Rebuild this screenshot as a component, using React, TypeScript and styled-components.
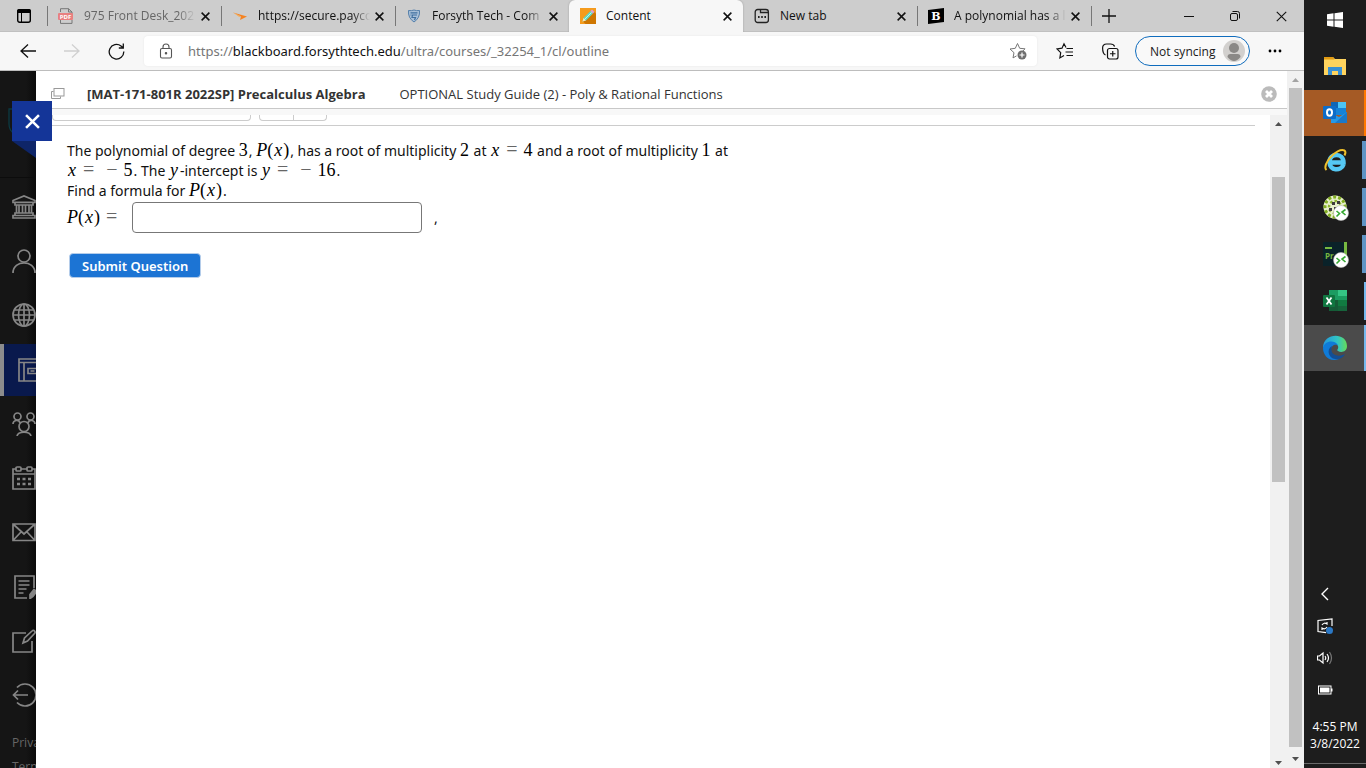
import React from "react";
import styled, { createGlobalStyle, css } from "styled-components";

const UI = `"Open Sans", "Noto Sans", sans-serif`;

const Global = createGlobalStyle`
  *, *::before, *::after { box-sizing: border-box; }
  html, body, #root { height: 100%; }
  body { margin: 0; font-family: ${UI}; font-size: 12px; color: #1a1a1a; overflow: hidden; background: #fff; }
  button { border: 0; padding: 0; background: none; font: inherit; color: inherit; }
  a { color: inherit; text-decoration: none; }
  svg { display: block; flex: none; }
  p, h1, h2, ul { margin: 0; padding: 0; }
  ul { list-style: none; }
`;

const Desktop = styled.div`
  display: grid;
  grid-template-columns: minmax(0, 1fr) 62px;
  height: 100vh;
`;

const Browser = styled.div`
  display: flex;
  flex-direction: column;
  min-width: 0;
  min-height: 0;
`;

/* ---------- tab strip ---------- */

const TabStrip = styled.div`
  display: flex;
  height: 32px;
  background: #cdcdcd;
  box-shadow: inset 0 -1px 0 #c0c0c0;
`;

const IconButton = styled.button<{ $w: number }>`
  display: flex;
  align-items: center;
  justify-content: center;
  width: ${(p) => p.$w}px;
  flex: none;
`;

const divider = css`
  &::before {
    content: "";
    position: absolute;
    left: 0;
    top: 6px;
    height: 20px;
    width: 1px;
    background: #777;
  }
`;

const TabBox = styled.div<{ $active?: boolean; $line?: boolean; $dim?: boolean }>`
  display: flex;
  align-items: center;
  flex: 0 1 174px;
  min-width: 0;
  padding: 0 8px 0 11px;
  position: relative;
  color: ${(p) => (p.$dim ? "#666" : "#111")};
  ${(p) =>
    p.$active &&
    css`
      background: #f7f7f7;
      border-radius: 6px 6px 0 0;
      box-shadow: 0 0 2px #999;
      clip-path: inset(-2px -2px 0 -2px);
    `}
  ${(p) => p.$line && divider}
`;

const TabTitle = styled.span<{ $fade?: boolean }>`
  flex: 1;
  min-width: 0;
  margin: 0 2px 0 10px;
  line-height: 20px;
  white-space: nowrap;
  overflow: hidden;
  ${(p) => p.$fade && css`mask-image: linear-gradient(to right, #000 84%, transparent 100%);`}
`;

const NewTabSlot = styled.div`
  position: relative;
  display: flex;
  padding: 0 10px;
  ${divider}
`;

const WindowControls = styled.div`
  display: flex;
  margin-left: auto;
`;

/* ---------- toolbar ---------- */

const Toolbar = styled.div`
  display: flex;
  align-items: center;
  height: 39px;
  padding: 0 4px 0 6px;
  background: #f7f7f7;
  border-bottom: 1px solid #bdbdbd;
`;

const AddressBar = styled.div`
  display: flex;
  align-items: center;
  flex: 1;
  min-width: 0;
  height: 30px;
  margin-left: 6px;
  padding: 0 9px 0 14px;
  background: #fff;
  border-radius: 4px;
  box-shadow: 0 0 2px #e4e4e4;
`;

const Address = styled.a`
  flex: 1;
  min-width: 0;
  margin-left: 14px;
  font-family: "Noto Sans", sans-serif;
  font-size: 13px;
  line-height: 20px;
  color: #767676;
  white-space: nowrap;
  overflow: hidden;
  b { font-weight: 400; color: #111; }
`;

const Profile = styled.button`
  display: flex;
  align-items: center;
  justify-content: space-between;
  width: 115px;
  height: 30px;
  margin-left: 8px;
  padding: 0 4px 0 14px;
  border: 1px solid #0f6cbd;
  border-radius: 15px;
  background: #f9f9f9;
`;

/* ---------- page ---------- */

const Page = styled.div`
  display: flex;
  flex: 1;
  min-height: 0;
`;

const Rail = styled.nav`
  position: relative;
  width: 36px;
  flex: none;
  background: linear-gradient(to right, #151515 26px, #0b0b0b);
  color: #868686;
`;

const RailClip = styled.div`
  display: flex;
  flex-direction: column;
  height: 100%;
  overflow: hidden;
`;

const RailLogo = styled.div`
  height: 107px;
  flex: none;
  padding: 37px 0 0 8px;
  border-bottom: 1px solid #0c0c0c;
`;

const RailList = styled.ul`
  display: flex;
  flex-direction: column;
  justify-content: space-between;
  height: 543px;
  padding-top: 3px;
  flex: none;
`;

const RailItem = styled.a<{ $on?: boolean }>`
  display: flex;
  align-items: center;
  height: 52px;
  padding-left: 12px;
  ${(p) => p.$on && css`
    background: linear-gradient(to right, #09194d 26px, #071543);
    border-left: 4px solid #8c8c8c;
    padding-left: 13px;
  `}
`;

const RailFooter = styled.div`
  display: flex;
  flex-direction: column;
  padding: 10px 0 0 12px;
  line-height: 24px;
  color: #666;
`;

const Ribbon = styled.button`
  position: absolute;
  left: 12px;
  top: 30px;
  width: 40px;
  height: 40px;
  display: flex;
  align-items: center;
  justify-content: center;
  background: #143598;
  z-index: 2;
`;

const RibbonFold = styled.svg`
  position: absolute;
  left: 12px;
  top: 70px;
`;

const Panel = styled.main`
  display: flex;
  flex-direction: column;
  flex: 1;
  min-width: 0;
  background: #fff;
`;

const PanelHeader = styled.header`
  display: flex;
  align-items: center;
  height: 38px;
  flex: none;
  padding: 8px 10px 0 15px;
  border-bottom: 1px solid #c8c8c8;
  color: #333;
  font-size: 13px;
  line-height: 20px;
  white-space: nowrap;
`;

const Course = styled.h1`
  margin-left: 22px;
  font-size: 13px;
  font-weight: 700;
`;

const ItemTitle = styled.h2`
  flex: 1;
  margin-left: 34px;
  font-size: 13px;
  font-weight: 400;
`;

const Frame = styled.div`
  display: flex;
  flex: 1;
  min-height: 0;
  border-top: 6px solid #f8f8f8;
`;

const FrameBody = styled.div`
  flex: 1;
  min-width: 0;
  padding: 0 15px 0 16px;
  overflow: hidden;
`;

const CutControls = styled.div`
  display: flex;
  gap: 8px;
  height: 11px;
  padding-bottom: 4px;
  border-bottom: 1px solid #ccc;
`;

const CutBox = styled.div<{ $w: number }>`
  display: flex;
  width: ${(p) => p.$w}px;
  border: 1px solid #ccc;
  border-top: 0;
  border-radius: 0 0 4px 4px;
  span { width: 34px; border-right: 1px solid #ccc; }
`;

const Question = styled.form`
  padding: 15px 0 0 15px;
  font-family: "Noto Sans", sans-serif;
  font-size: 14px;
  line-height: 20px;
  color: #111;
  white-space: nowrap;
`;

const M = styled.span`
  margin-right: 1px;
  font-family: "Liberation Serif", serif;
  font-size: 18px;
  line-height: 18px;
  color: #000;
`;

const Var = styled.i`
  margin: 0 1px;
`;

const Op = styled.span`
  margin: 0 6px;
  font-size: 20px;
  line-height: 16px;
  color: #666;
`;

const AnswerRow = styled.div`
  display: flex;
  align-items: center;
  margin-top: 1px;
  label { width: 65px; }
`;

const Answer = styled.input`
  width: 290px;
  height: 31px;
  margin-right: 12px;
  border: 1px solid #777;
  border-radius: 4px;
  background: #fff;
`;

const Submit = styled.button`
  height: 25px;
  margin: 20px 0 0 2px;
  padding: 0 12px;
  border: 1px solid #b5cdea;
  border-radius: 4px;
  background: #1c74d4;
  color: #fff;
  font-size: 13px;
  font-weight: 600;
  line-height: 20px;
`;

const Track = styled.div<{ $outer?: boolean }>`
  display: flex;
  flex-direction: column;
  align-items: center;
  width: 17px;
  flex: none;
  padding: ${(p) => (p.$outer ? "7px 0" : "7px 0 3px")};
  background: #f1f1f1;
`;

const Thumb = styled.div<{ $before: number; $size: number; $after: number }>`
  display: flex;
  flex-direction: column;
  flex: 1;
  &::before { content: ""; flex: ${(p) => p.$before}; }
  &::after { content: ""; flex: ${(p) => p.$after}; }
  span { width: 13px; flex: ${(p) => p.$size}; background: #c1c1c1; }
`;

/* ---------- task bar ---------- */

const Taskbar = styled.aside`
  display: flex;
  flex-direction: column;
  background: #1d1d1d;
  color: #fff;
`;

const StartButton = styled.button`
  display: flex;
  align-items: center;
  justify-content: center;
  height: 40px;
  margin-bottom: 3px;
`;

const Task = styled.button<{ $bg?: string; $bar?: string; $wide?: boolean }>`
  position: relative;
  display: flex;
  align-items: center;
  justify-content: center;
  height: 46px;
  margin-bottom: 1px;
  background: ${(p) => p.$bg || "transparent"};
  &::after {
    content: "";
    position: absolute;
    right: 0;
    top: ${(p) => (p.$bg ? 0 : 4)}px;
    bottom: ${(p) => (p.$bg ? 0 : 4)}px;
    width: ${(p) => (p.$wide ? 4 : 2)}px;
    background: ${(p) => p.$bar || "transparent"};
  }
`;

const Tray = styled.div`
  display: flex;
  flex-direction: column;
  margin-top: auto;
  padding-bottom: 4px;
`;

const TrayButton = styled.button`
  display: flex;
  align-items: center;
  height: 32px;
  padding-left: 13px;
`;

const Clock = styled.time`
  margin-top: 12px;
  height: 46px;
  border-bottom: 1px solid #6a6a6a;
  text-align: center;
  line-height: 17px;
  white-space: nowrap;
`;

const Cross = ({ s = 9, w = 2, c = "#111" }: { s?: number; w?: number; c?: string }) => (
  <svg width={s} height={s} viewBox="0 0 10 10" fill="none" stroke={c} strokeWidth={w}>
    <path d="M.7.7l8.6 8.6M9.3.7L.7 9.3" />
  </svg>
);

const Line = ({ children }: { children: React.ReactNode }) => (
  <svg width="24" height="24" viewBox="0 0 24 24" fill="none" stroke="currentColor" strokeWidth="1.700">
    {children}
  </svg>
);

const PdfIcon = () => (
  <svg width="16" height="16" viewBox="0 0 16 16">
    <path d="M2.500 4V.700h8L14 4v3M10.500.700V4H14M2.500 12v3.400H14V12" fill="none" stroke="#777" />
    <rect x="0" y="5" width="15" height="7" rx="1" fill="#e88080" />
    <text x="7.500" y="10.800" fontSize="6" fontWeight="700" textAnchor="middle" fill="#fff" fontFamily="Open Sans, sans-serif">PDF</text>
  </svg>
);

const PaycomIcon = () => (
  <svg width="16" height="16" viewBox="0 0 16 16">
    <path d="M1 4.500l14 4-7 3.500 1-3.500z" fill="#f58220" />
    <path d="M1 4.500l8 4-2 .2z" fill="#f9a94b" />
  </svg>
);

const ShieldIcon = () => (
  <svg width="16" height="16" viewBox="0 0 16 16">
    <path d="M2.500 2.500q3 .5 5.500-.5 2.500 1 5.500.5.7 7.500-5.500 11.500Q1.800 10 2.500 2.500z" fill="#a9c0d8" stroke="#5580ab" />
    <path d="M4.500 4.800h7M11 7H6.500L6 9.500h3.500L8.500 12M4.500 7h1" fill="none" stroke="#3f6f9f" strokeWidth="1.200" />
  </svg>
);

const PencilIcon = () => (
  <svg width="16" height="16" viewBox="0 0 16 16">
    <path d="M0 0h16v16H0z" fill="#f59b1c" />
    <path d="M3 13.500L13.500 3 16 5.500V16H5.500z" fill="#ce7600" />
    <path d="M2.500 13.500l1-3.500 7-7L13 5.500l-7 7z" fill="#5fd6c4" />
    <path d="M10.500 3L12 1.500 14.500 4 13 5.500z" fill="#d9a0d8" />
    <path d="M2.500 13.500l1-3.500L6 12.500z" fill="#fbe3b8" />
    <path d="M4.500 11.500l7-7" stroke="#d5fff7" strokeWidth=".8" />
  </svg>
);

const NewTabIcon = () => (
  <svg width="16" height="16" viewBox="0 0 16 16" fill="none" stroke="#222" strokeWidth="1.300">
    <rect x="1.200" y="1.500" width="13.200" height="13" rx="2.500" />
    <path d="M6.500 1.500v3h8" />
    <path d="M4 9h1.600M7.200 9h1.600M10.400 9H12" strokeWidth="1.800" />
  </svg>
);

const BartlebyIcon = () => (
  <svg width="16" height="16" viewBox="0 0 16 16">
    <path d="M0 2L16 0v14L0 16z" fill="#000" />
    <text x="8" y="12" fontSize="11" fontWeight="700" textAnchor="middle" fill="#fff" fontFamily="DejaVu Serif, serif">B</text>
  </svg>
);

type TabSpec = { title: string; icon: React.ReactNode; active?: boolean; line?: boolean; dim?: boolean; fade?: boolean };

const tabs: TabSpec[] = [
  { title: "975 Front Desk_202", icon: <PdfIcon />, line: true, dim: true, fade: true },
  { title: "https://secure.payco", icon: <PaycomIcon />, line: true, fade: true },
  { title: "Forsyth Tech - Com", icon: <ShieldIcon />, line: true, fade: true },
  { title: "Content", icon: <PencilIcon />, active: true },
  { title: "New tab", icon: <NewTabIcon /> },
  { title: "A polynomial has a l", icon: <BartlebyIcon />, line: true, fade: true },
];

const rail: { name: string; on?: boolean; art: React.ReactNode }[] = [
  { name: "Institution", art: <path d="M1 5.500L12 1l11 4.500v1.800H1zM1 23h22v-2.500H1zM3 20.500V18h18v2.500M3 7.500V10h18V7.500M4.500 10v8M7 10v8M10.500 10v8M13.500 10v8M17 10v8M19.500 10v8" /> },
  { name: "Profile", art: <><circle cx="12" cy="7" r="6" /><path d="M1 24C1 10.500 23 10.500 23 24" /></> },
  { name: "Activity", art: <><circle cx="12" cy="12" r="11" /><ellipse cx="12" cy="12" rx="5.500" ry="11" /><path d="M12 1v22M1 12h22M2.500 7h19M2.500 17h19" /></> },
  { name: "Courses", on: true, art: <path d="M26 1H2v22h24M2 4.500h24M7 4.500V23M19 10.500h-8v5h8M13.500 13h4" /> },
  { name: "Organizations", art: <><circle cx="5.500" cy="4.500" r="3.500" /><circle cx="18.500" cy="4.500" r="3.500" /><circle cx="12" cy="14.500" r="5" /><path d="M1 12c0-4 6-5 7-1M23 12c0-4-6-5-7-1M5 24c1-5 13-5 14 0" /></> },
  { name: "Calendar", art: <><path d="M4 3H1v20h22V3h-3M9 3h6M1 8h22" /><rect x="4" y="1" width="5" height="4" rx="1" /><rect x="15" y="1" width="5" height="4" rx="1" /><path d="M5 13h3M10.500 13h3M16 13h3M5 18h3M10.500 18h3M16 18h3" strokeWidth="2.500" /></> },
  { name: "Messages", art: <path d="M1 4h22v16.500H1zM1 4l11 10L23 4M1 20.500l8-8.500M23 20.500L15 12" /> },
  { name: "Grades", art: <><path d="M15 23H3V1h19v12M6.500 6h11M6.500 10h11M6.500 14h8M6.500 18h5" /><path d="M18 23.500v-4l4-5 2.500 2-3.500 5z" fill="currentColor" /></> },
  { name: "Tools", art: <><path d="M14 4H1v19h19V12" /><path d="M11 14l1.500-5 7.500-7c2-2 4 1 2.500 2.500L15.500 12z" /></> },
  { name: "Sign Out", art: <path d="M5 4.500a11 11 0 1 1 0 15M16 12H1.500M6 7.500L1.500 12 6 16.500" /> },
];

const Remote = () => (
  <>
    <circle cx="18" cy="18" r="7.500" fill="#fff" stroke="#bbb" strokeWidth=".6" />
    <path d="M13.500 16l3 2.500-3 3M22.500 14.500l-3.500 2.500 3.500 3" fill="none" stroke="#36a832" strokeWidth="1.600" />
  </>
);

const tasks: { name: string; bg?: string; bar?: string; wide?: boolean; art: React.ReactNode }[] = [
  { name: "File Explorer", art: <><path d="M1 3h9l2 2h11v16H1z" fill="#ffd45e" /><path d="M1 3h9l1.500 2.500H1z" fill="#e19a12" /><path d="M5 21v-8h14v8h-4v-4H9v4z" fill="#3a91d4" /></> },
  { name: "Outlook", bg: "#a55a25", bar: "#ff7800", art: <><path d="M8 1h15v13H8z" fill="#1683d8" /><path d="M15 1h8v6h-8z" fill="#4bc5f5" /><path d="M8 1h7v6H8z" fill="#1066b5" /><path d="M8 12l8 4 8-5v11H8z" fill="#2699e8" /><path d="M24 11v11H12z" fill="#1b79c9" /><rect y="5" width="13" height="13" rx="1" fill="#0d6cc8" /><ellipse cx="6.500" cy="11.500" rx="2.500" ry="3.200" fill="none" stroke="#fff" strokeWidth="2" /></> },
  { name: "Internet Explorer", bar: "#5e94c4", wide: true, art: <><path d="M20.500 16.500c-2.500 7-14 6.500-14-2.500 0-9.500 14-9.500 14 .5H8" fill="none" stroke="#55c8f4" strokeWidth="4.500" /><path d="M3.500 22C-2 17 14-1 21.500 2.500c1.500 1 1 3 0 5" fill="none" stroke="#efc02b" strokeWidth="2" /></> },
  { name: "Remote session", bar: "#5e94c4", wide: true, art: <><circle cx="12" cy="12" r="11.500" fill="#e8f0cc" /><circle cx="12" cy="12" r="10" fill="none" stroke="#82ad22" strokeWidth="3" strokeDasharray="3 2" /><circle cx="12" cy="12" r="6" fill="none" stroke="#8db52f" strokeWidth="2.500" strokeDasharray="2.500 2" /><path d="M9 7h3v3H9zM14 6h3v3h-3zM6 13h3v3H6zM11 12h3v3h-3z" fill="#3e3a3c" /><Remote /></> },
  { name: "Project session", bar: "#5e94c4", wide: true, art: <><path d="M0 0h24v24H0z" fill="#0a2229" /><path d="M21 0h3v13h-3zM2 5h7v2H2z" fill="#77b941" /><text x="2" y="17" fontSize="8" fontWeight="700" fill="#77b941" fontFamily="Open Sans, sans-serif">Pr</text><Remote /></> },
  { name: "Excel", bar: "#76b9ed", art: <><path d="M6 1h18v21H6z" fill="#1c9c62" /><path d="M15 1h9v6h-9z" fill="#35c585" /><path d="M6 11h9v11H6z" fill="#155c37" /><path d="M15 11h9v6h-9z" fill="#117b41" /><path d="M15 17h9v5h-9z" fill="#16643b" /><rect y="6" width="12" height="12" rx="1" fill="#107640" /><path d="M3.500 8.500l5 7M8.500 8.500l-5 7" stroke="#fff" strokeWidth="1.800" /></> },
  { name: "Microsoft Edge", bg: "#4b4b4b", bar: "#76b9ed", art: <><defs><linearGradient id="sea" x1="0" x2="1"><stop offset="0" stopColor="#2496dc" /><stop offset=".6" stopColor="#31c5c4" /><stop offset="1" stopColor="#66dc58" /></linearGradient></defs><path d="M0 12C0-4 24-4 24 10c0 6-6 7-9 5-2-1 1-2 0-5-2-4-10-6-15 2z" fill="url(#sea)" /><path d="M0 12c1-7 11-9 15-3-4-1-7 1-7 5 0 5 4 9 8 9C6 27 0 19 0 12z" fill="#0f7bd8" /><path d="M9 10c-3 9 6 12 13 8-3 6-10 6-13 4-5-4-4-10 0-12z" fill="#134f95" /></> },
];

const X = () => <Var>x</Var>;
const Px = () => <><i>P</i>(<X />)</>;

const Arrow = ({ down, c = "#505050" }: { down?: boolean; c?: string }) => (
  <svg width="7" height="4" viewBox="0 0 7 4" fill={c}>
    <path d={down ? "M0 0h7L3.500 4z" : "M0 4h7L3.500 0z"} />
  </svg>
);

export default function App() {
  return (
    <Desktop>
      <Global />
      <Browser>
        <TabStrip>
          <IconButton $w={47} aria-label="Tab actions">
            <svg width="14" height="14" viewBox="0 0 14 14"><rect x=".7" y=".7" width="12.600" height="12.600" rx="2" fill="none" stroke="#000" strokeWidth="1.400" /><path d="M0 2q0-2 2-2h10q2 0 2 2v2H0zM4 4h1v9H4z" /></svg>
          </IconButton>
          {tabs.map((t) => (
            <TabBox key={t.title} $active={t.active} $line={t.line} $dim={t.dim}>
              {t.icon}
              <TabTitle $fade={t.fade}>{t.title}</TabTitle>
              <IconButton $w={15} aria-label={`Close ${t.title}`}><Cross w={1.7} /></IconButton>
            </TabBox>
          ))}
          <NewTabSlot>
            <IconButton $w={16} aria-label="New tab">
              <svg width="14" height="14" viewBox="0 0 14 14" stroke="#111" strokeWidth="1.300"><path d="M7 0v14M0 7h14" /></svg>
            </IconButton>
          </NewTabSlot>
          <WindowControls>
            <IconButton $w={46} aria-label="Minimize"><svg width="10" height="10" viewBox="0 0 10 10" stroke="#111"><path d="M0 5.500h10" /></svg></IconButton>
            <IconButton $w={46} aria-label="Restore"><svg width="10" height="10" viewBox="0 0 10 10" fill="none" stroke="#111"><rect x=".5" y="2.500" width="7" height="7" rx="1.500" /><path d="M2.500.500h5q2 0 2 2v5" /></svg></IconButton>
            <IconButton $w={46} aria-label="Close window"><Cross s={11} w={1} /></IconButton>
          </WindowControls>
        </TabStrip>

        <Toolbar>
          <IconButton $w={44} aria-label="Back"><svg width="16" height="14" viewBox="0 0 16 14" fill="none" stroke="#111" strokeWidth="1.300"><path d="M16 7H1M8 .5L1 7l7 6.500" /></svg></IconButton>
          <IconButton $w={44} aria-label="Forward" disabled><svg width="16" height="14" viewBox="0 0 16 14" fill="none" stroke="#d0d0d0" strokeWidth="1.300"><path d="M0 7h15M8 .5L15 7l-7 6.500" /></svg></IconButton>
          <IconButton $w={44} aria-label="Refresh"><svg width="17" height="17" viewBox="0 0 17 17" fill="none" stroke="#111" strokeWidth="1.300"><path d="M15.800 8.500A7.300 7.300 0 1 1 13 3l2 1.500M15.300.5v4.500h-4.500" /></svg></IconButton>
          <AddressBar>
            <IconButton $w={16} aria-label="Site information"><svg width="14" height="16" viewBox="0 0 14 16" fill="none" stroke="#555" strokeWidth="1.100"><rect x="1.500" y="5.500" width="11" height="9.500" rx="1.500" /><path d="M4 5.500V4q0-3 3-3t3 3v1.500" /><circle cx="7" cy="10.200" r=".7" fill="#555" /></svg></IconButton>
            <Address href="#outline">https://<b>blackboard.forsythtech.edu</b>/ultra/courses/_32254_1/cl/outline</Address>
            <IconButton $w={20} aria-label="Add to favorites"><svg width="18" height="18" viewBox="0 0 18 18" fill="none" stroke="#777"><path d="M8.500 1.500l2.200 4.800 5.300.5-3.500 3.700M8.500 1.500L6.300 6.300 1 7l4 3.700-1 5.200 3.500-2" /><circle cx="13" cy="13" r="4.500" fill="#6e6e6e" stroke="none" /><path d="M13 10.500v5M10.500 13h5" stroke="#fff" strokeWidth="1.200" /></svg></IconButton>
          </AddressBar>
          <IconButton $w={56} aria-label="Favorites"><svg width="18" height="18" viewBox="0 0 18 18" fill="none" stroke="#111" strokeWidth="1.200"><path d="M10 5.500L8 1.800 6 6.200 1 7l3.700 3.700-.8 5.200L8 13.500M10.500 6.500H17M9.500 10H17M10.500 13.500H17" /></svg></IconButton>
          <IconButton $w={34} aria-label="Collections"><svg width="17" height="17" viewBox="0 0 17 17" fill="none" stroke="#111" strokeWidth="1.200"><rect x="5.500" y="5.500" width="10.500" height="10.500" rx="2" /><path d="M10.750 8v5.500M8 10.750h5.500M3.500 12C1 11 .600 9 .600 5q0-4 4-4h4q3 0 4 2.500" /></svg></IconButton>
          <Profile>
            Not syncing
            <svg width="22" height="22" viewBox="0 0 22 22"><circle cx="11" cy="11" r="11" fill="#d2d0ce" /><circle cx="11" cy="8" r="5" fill="#8a8886" /><path d="M4.500 17q0-3 3-3h7q3 0 3 3-6.500 8-13 0z" fill="#8a8886" /></svg>
          </Profile>
          <IconButton $w={50} aria-label="Settings and more"><svg width="14" height="4" viewBox="0 0 14 4"><circle cx="2" cy="2" r="1.400" /><circle cx="7" cy="2" r="1.400" /><circle cx="12" cy="2" r="1.400" /></svg></IconButton>
        </Toolbar>

        <Page>
          <Rail>
            <RailClip>
              <RailLogo><svg width="28" height="28" viewBox="0 0 28 28" fill="none" stroke="#0b3a42" strokeWidth="1.300"><path d="M4 1H1v15q0 7 6 10" /></svg></RailLogo>
              <RailList>
                {rail.map((r) => (
                  <li key={r.name}><RailItem href="#" $on={r.on} aria-label={r.name}><Line>{r.art}</Line></RailItem></li>
                ))}
              </RailList>
              <RailFooter><a href="#privacy">Privacy</a><a href="#terms">Terms</a></RailFooter>
            </RailClip>
            <RibbonFold width="24" height="18" viewBox="0 0 24 18"><path d="M0 0h24v17z" fill="#0e2568" /></RibbonFold>
            <Ribbon aria-label="Close panel"><Cross s={15} w={1.7} c="#fff" /></Ribbon>
          </Rail>

          <Panel>
            <PanelHeader>
              <svg width="14" height="12" viewBox="0 0 14 12" fill="none" stroke="#999"><rect x="3" y=".5" width="10" height="7.500" /><path d="M2.500 3.500h-2v7h9V8.500" /></svg>
              <Course>[MAT-171-801R 2022SP] Precalculus Algebra</Course>
              <ItemTitle>OPTIONAL Study Guide (2) - Poly &amp; Rational Functions</ItemTitle>
              <IconButton $w={16} aria-label="Close content"><svg width="16" height="16" viewBox="0 0 16 16"><circle cx="8" cy="8" r="7.800" fill="#bbb" /><path d="M5 5l6 6M11 5l-6 6" stroke="#fff" strokeWidth="2.800" /></svg></IconButton>
            </PanelHeader>
            <Frame>
              <FrameBody>
                <CutControls><CutBox $w={199} /><CutBox $w={68}><span /></CutBox></CutControls>
                <Question onSubmit={(e) => e.preventDefault()}>
                  <p>The polynomial of degree <M>3</M>, <M><Px /></M>, has a root of multiplicity <M>2</M> at <M><X /><Op>=</Op>4</M> and a root of multiplicity <M>1</M> at</p>
                  <p><M><X /><Op>=</Op><Op>−</Op>5</M>. The <M><Var>y</Var></M>-intercept is <M><Var>y</Var><Op>=</Op><Op>−</Op>16</M>.</p>
                  <p>Find a formula for <M><Px /></M>.</p>
                  <AnswerRow>
                    <label htmlFor="answer"><M><Px /><Op>=</Op></M></label>
                    <Answer id="answer" type="text" />
                    <span>,</span>
                  </AnswerRow>
                  <Submit type="submit">Submit Question</Submit>
                </Question>
              </FrameBody>
              <Track>
                <Arrow />
                <Thumb $before={51} $size={306} $after={280}><span /></Thumb>
                <Arrow down />
              </Track>
            </Frame>
          </Panel>
          <Track $outer>
            <Arrow c="#a3a3a3" />
            <Thumb $before={6} $size={659} $after={10}><span /></Thumb>
            <Arrow down />
          </Track>
        </Page>
      </Browser>

      <Taskbar>
        <StartButton aria-label="Start"><svg width="16" height="16" viewBox="0 0 16 16" fill="#fff"><path d="M0 2.200L6.500 1.300v6.200H0zM7.500 1.200L16 0v7.500H7.500zM0 8.500h6.500v6.200L0 13.800zM7.500 8.500H16V16l-8.500-1.200z" /></svg></StartButton>
        {tasks.map((t) => (
          <Task key={t.name} aria-label={t.name} $bg={t.bg} $bar={t.bar} $wide={t.wide}>
            <svg width="24" height="24" viewBox="0 0 24 24" overflow="visible">{t.art}</svg>
          </Task>
        ))}
        <Tray>
          <TrayButton aria-label="Show hidden icons"><svg width="16" height="14" viewBox="0 0 16 14" fill="none" stroke="#fff" strokeWidth="1.400"><path d="M11 1L5 7l6 6" /></svg></TrayButton>
          <TrayButton aria-label="Update status"><svg width="17" height="16" viewBox="0 0 17 16" fill="none" stroke="#fff" strokeWidth="1.200"><path d="M15 8V1L1 2.500v11l8 1.200M5 7q2-3 5-1V4M10 9q-2 3-5 1v2" /><circle cx="12.500" cy="12.500" r="3.500" fill="#2b78c5" stroke="none" /></svg></TrayButton>
          <TrayButton aria-label="Volume"><svg width="16" height="14" viewBox="0 0 16 14" fill="none" stroke="#fff" strokeWidth="1.200"><path d="M.5 5v4h2l3.500 3V2L2.500 5zM8 5q1.500 2 0 4M10 3q3 4 0 8" /><path d="M12.500 1q4 6 0 12" stroke="#777" /></svg></TrayButton>
          <TrayButton aria-label="Battery"><svg width="16" height="10" viewBox="0 0 16 10"><rect x="1.500" y="1" width="12.500" height="8" fill="none" stroke="#fff" /><path d="M3 2.500h9.500v5H3zM14 3.500h1.500v3H14z" fill="#fff" /></svg></TrayButton>
          <Clock>4:55 PM<br />3/8/2022</Clock>
        </Tray>
      </Taskbar>
    </Desktop>
  );
}
